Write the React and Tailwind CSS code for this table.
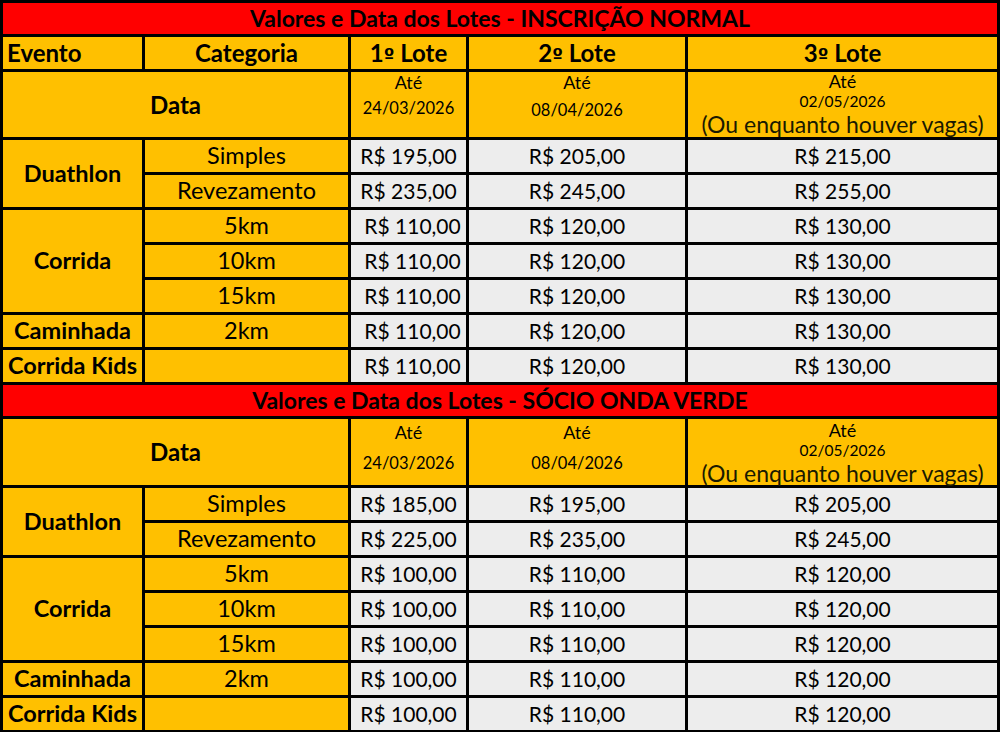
const yellow = "bg-[#ffc000]"
const gray = "bg-[#ededed]"

// ordinal with underline, like the spreadsheet font
function Ord() {
  return <span className="font-['DejaVu_Sans',sans-serif] text-[19px]">º</span>
}

function Title({ children }) {
  return (
    <div className="col-span-5 bg-[#ff0000] flex items-center justify-center text-[23px] font-bold leading-none">
      {children}
    </div>
  )
}

function DateRow({ first }) {
  const top = first ? "pt-[1px]" : "pt-[4px]"
  return (
    <>
      <div className={`col-span-2 ${yellow} flex items-center justify-center text-[24px] font-bold`}>Data</div>
      <div className={`${yellow} flex flex-col items-center ${top}`}>
        <span className="text-[18px] leading-[18px]">Até</span>
        <span className={`text-[16.5px] leading-[18px] ${first ? "mt-[8px]" : "mt-[13px]"}`}>24/03/2026</span>
      </div>
      <div className={`${yellow} flex flex-col items-center ${top}`}>
        <span className="text-[18px] leading-[18px]">Até</span>
        <span className={`text-[16.5px] leading-[18px] ${first ? "mt-[10px]" : "mt-[13px]"}`}>08/04/2026</span>
      </div>
      <div className={`${yellow} flex flex-col items-center ${first ? "pt-[1px]" : "pt-[3px]"}`}>
        <span className="text-[18px] leading-[16px]">Até</span>
        <span className="text-[15.5px] leading-[18px] mt-[3px]">02/05/2026</span>
        <span className="text-[23px] leading-[28px] text-[#1a1a00]">(Ou enquanto houver vagas)</span>
      </div>
    </>
  )
}

function Prices({ p, shift }) {
  return (
    <>
      <div className={`${gray} flex items-center justify-center text-[21px] ${shift ? "pl-[8px]" : ""}`}>R$ {p[0]}</div>
      <div className={`${gray} flex items-center justify-center text-[21px]`}>R$ {p[1]}</div>
      <div className={`${gray} flex items-center justify-center text-[21px]`}>R$ {p[2]}</div>
    </>
  )
}

function Cat({ children }) {
  return <div className={`${yellow} flex items-center justify-center text-[23.5px]`}>{children}</div>
}

function Event({ children, span = "" }) {
  return (
    <div className={`${span} ${yellow} flex items-center justify-center text-[23.5px] font-bold whitespace-nowrap`}>
      {children}
    </div>
  )
}

function Lote({ n }) {
  return (
    <div className={`${yellow} flex items-center justify-center text-[24px] font-bold`}>
      <span>{n}<Ord /> Lote</span>
    </div>
  )
}

function Section({ title, first, prices }) {
  return (
    <>
      <Title>{title}</Title>
      {first && (
        <>
          <div className={`${yellow} flex items-center pl-[4px] text-[24px] font-bold`}>Evento</div>
          <div className={`${yellow} flex items-center justify-center text-[24px] font-bold`}>Categoria</div>
          <Lote n="1" />
          <Lote n="2" />
          <Lote n="3" />
        </>
      )}
      <DateRow first={first} />
      <Event span="row-span-2">Duathlon</Event>
      <Cat>Simples</Cat>
      <Prices p={prices[0]} />
      <Cat>Revezamento</Cat>
      <Prices p={prices[1]} />
      <Event span="row-span-3">Corrida</Event>
      <Cat>5km</Cat>
      <Prices p={prices[2]} shift={first} />
      <Cat>10km</Cat>
      <Prices p={prices[2]} shift={first} />
      <Cat>15km</Cat>
      <Prices p={prices[2]} shift={first} />
      <Event>Caminhada</Event>
      <Cat>2km</Cat>
      <Prices p={prices[2]} shift={first} />
      <Event>Corrida Kids</Event>
      <Cat></Cat>
      <Prices p={prices[2]} shift={first} />
    </>
  )
}

export default function App() {
  return (
    <div className="w-[1000px] h-[732px] bg-black p-[3px] pb-[2px] overflow-hidden font-[Lato,sans-serif] text-black">
      <div className="grid gap-[3px] grid-cols-[139px_203px_115px_216px_1fr] grid-rows-[31px_32px_65px_repeat(7,32px)_31px_66px_repeat(7,32px)]">
        <Section
          title="Valores e Data dos Lotes - INSCRIÇÃO NORMAL"
          first
          prices={[["195,00", "205,00", "215,00"], ["235,00", "245,00", "255,00"], ["110,00", "120,00", "130,00"]]}
        />
        <Section
          title="Valores e Data dos Lotes - SÓCIO ONDA VERDE"
          prices={[["185,00", "195,00", "205,00"], ["225,00", "235,00", "245,00"], ["100,00", "110,00", "120,00"]]}
        />
      </div>
    </div>
  )
}
